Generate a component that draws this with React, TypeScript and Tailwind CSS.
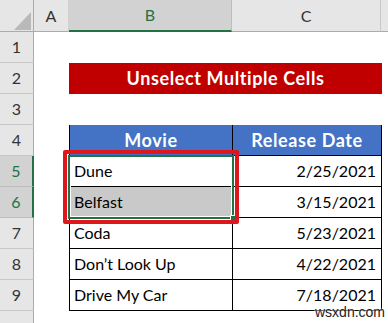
const rows = [
  { movie: 'Dune', date: '2/25/2021' },
  { movie: 'Belfast', date: '3/15/2021', shaded: true },
  { movie: 'Coda', date: '5/23/2021' },
  { movie: 'Don\u2019t Look Up', date: '4/22/2021' },
  { movie: 'Drive My Car', date: '7/18/2021' },
];

const RowHead = ({ n, selected }: { n?: number; selected?: boolean }) => (
  <div
    className={
      'w-[34px] h-full shrink-0 flex items-center justify-center border-b border-r text-[16px] ' +
      (selected
        ? 'bg-[#d2d2d2] border-b-[#bdbdbd] border-r-[#217346] border-r-2 text-[#217346]'
        : 'bg-[#e6e6e6] border-b-[#c8c8c8] border-r-[#ababab] text-[#333]')
    }
  >
    {n}
  </div>
);

const Spacer = () => <div className="w-[35px] h-full shrink-0" />;

export default function App() {
  return (
    <div className="relative w-[388px] h-[323px] overflow-hidden bg-white font-['Lato',sans-serif] text-black">
      {/* column header */}
      <div className="flex h-[32px]">
        <div className="relative w-[34px] h-full shrink-0 bg-[#e6e6e6] border-b border-r border-[#ababab]">
          <svg className="absolute left-[14px] top-[12px]" width="17" height="18" viewBox="0 0 17 18">
            <polygon points="17,0 17,18 0,18" fill="#b9b9b9" />
          </svg>
        </div>
        <div className="w-[35px] h-full shrink-0 bg-[#e6e6e6] border-b border-r border-b-[#ababab] border-r-[#d0d0d0] flex items-center justify-center text-[16px] text-[#333]">
          A
        </div>
        <div className="w-[163px] h-full shrink-0 bg-[#d2d2d2] border-b-2 border-b-[#217346] border-r border-r-[#bdbdbd] flex items-center justify-center text-[16px] text-[#217346]">
          B
        </div>
        <div className="w-[149px] h-full shrink-0 bg-[#e6e6e6] border-b border-r border-b-[#ababab] border-r-[#c8c8c8] flex items-center justify-center text-[16px] text-[#333]">
          C
        </div>
        <div className="flex-1 h-full bg-[#e6e6e6] border-b border-[#ababab]" />
      </div>

      {/* row 1 */}
      <div className="flex h-[31px]">
        <RowHead n={1} />
      </div>

      {/* row 2 */}
      <div className="flex h-[31px]">
        <RowHead n={2} />
        <Spacer />
        <div className="w-[313px] h-full shrink-0 bg-[#c00000] text-white font-bold text-[18px] tracking-[0.6px] flex items-center justify-center">
          Unselect Multiple Cells
        </div>
      </div>

      {/* row 3 */}
      <div className="flex h-[31px]">
        <RowHead n={3} />
      </div>

      {/* row 4 */}
      <div className="flex h-[31px]">
        <RowHead n={4} />
        <Spacer />
        <div className="w-[164px] h-full shrink-0 bg-[#4472c4] text-white font-bold text-[18px] tracking-[0.6px] flex items-center justify-center border-l border-r border-b border-black">
          Movie
        </div>
        <div className="w-[149px] h-full shrink-0 bg-[#4472c4] text-white font-bold text-[18px] tracking-[0.6px] flex items-center justify-center border-r border-b border-black">
          Release Date
        </div>
      </div>

      {rows.map((r, i) => (
        <div key={r.movie} className="flex h-[31px]">
          <RowHead n={i + 5} selected={i < 2} />
          <Spacer />
          <div
            className={
              'w-[164px] h-full shrink-0 flex items-center pl-[4px] text-[16px] border-l border-r border-b border-black ' +
              (r.shaded ? 'bg-[#c9c9c9]' : 'bg-white')
            }
          >
            {r.movie}
          </div>
          <div className="w-[149px] h-full shrink-0 flex items-center justify-end pr-[5px] text-[16px] border-r border-b border-black">
            {r.date}
          </div>
        </div>
      ))}

      {/* row 10 (only its header edge shows) */}
      <div className="flex h-[31px]">
        <RowHead />
      </div>

      {/* green selection around B5:B6 */}
      <div className="absolute left-[68px] top-[155px] w-[166px] h-[64px] border-2 border-[#217346]">
        <div className="absolute inset-0 border border-white" />
        <div className="absolute right-[-4px] bottom-[-4px] w-[6px] h-[6px] bg-[#217346] border border-white" />
      </div>

      {/* red highlight box */}
      <div className="absolute left-[63px] top-[150px] w-[176px] h-[74px] border-[4px] border-[#e0161e] rounded-[2px]" />

      {/* watermark */}
      <div className="absolute left-[315px] top-[304px] leading-[16px] text-[14px] text-[#222] font-['Liberation_Sans',sans-serif] [text-shadow:0_0_2px_#fff,0_0_2px_#fff]">
        wsxdn.com
      </div>
    </div>
  );
}
